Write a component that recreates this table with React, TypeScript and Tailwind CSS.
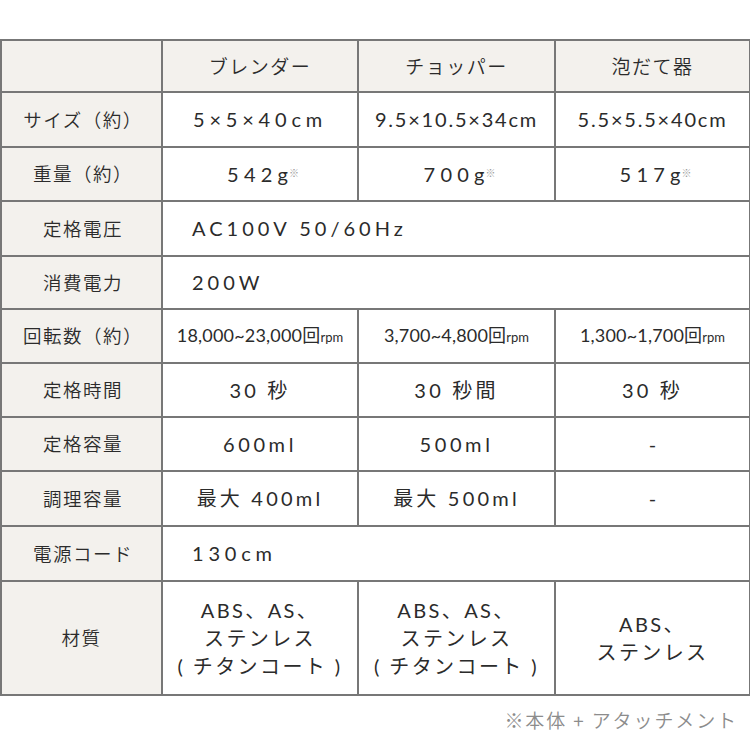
const FONT = { fontFamily: '"Noto Sans CJK JP", "Noto Sans", sans-serif' };
const LATIN = { fontFamily: 'Lato, "Noto Sans CJK JP", sans-serif' };

type Cell = { text: string; cls?: string; mark?: boolean; rpm?: boolean };

interface Row {
  label: string;
  cells: Cell[] | Cell; // single cell = spans the 3 product columns
  h: string;
}

const PRODUCTS = ["ブレンダー", "チョッパー", "泡だて器"];

const ROWS: Row[] = [
  {
    label: "サイズ（約）",
    cells: [
      { text: "5×5×40cm", cls: "tracking-[0.24em]" },
      { text: "9.5×10.5×34cm", cls: "tracking-[0.09em]" },
      { text: "5.5×5.5×40cm", cls: "tracking-[0.09em]" },
    ],
    h: "h-[55px]",
  },
  {
    label: "重量（約）",
    cells: [
      { text: "542g", mark: true, cls: "tracking-[0.26em]" },
      { text: "700g", mark: true, cls: "tracking-[0.26em]" },
      { text: "517g", mark: true, cls: "tracking-[0.26em]" },
    ],
    h: "h-[54px]",
  },
  { label: "定格電圧", cells: { text: "AC100V 50/60Hz", cls: "tracking-[0.2em]" }, h: "h-[55px]" },
  { label: "消費電力", cells: { text: "200W", cls: "tracking-[0.2em]" }, h: "h-[53px]" },
  {
    label: "回転数（約）",
    cells: [
      { text: "18,000~23,000回", rpm: true },
      { text: "3,700~4,800回", rpm: true },
      { text: "1,300~1,700回", rpm: true },
    ],
    h: "h-[54px]",
  },
  {
    label: "定格時間",
    cells: [
      { text: "30 秒", cls: "tracking-[0.16em]" },
      { text: "30 秒間", cls: "tracking-[0.16em]" },
      { text: "30 秒", cls: "tracking-[0.16em]" },
    ],
    h: "h-[54px]",
  },
  {
    label: "定格容量",
    cells: [
      { text: "600ml", cls: "tracking-[0.18em]" },
      { text: "500ml", cls: "tracking-[0.18em]" },
      { text: "-" },
    ],
    h: "h-[54px]",
  },
  {
    label: "調理容量",
    cells: [
      { text: "最大 400ml", cls: "tracking-[0.16em]" },
      { text: "最大 500ml", cls: "tracking-[0.16em]" },
      { text: "-" },
    ],
    h: "h-[55px]",
  },
  { label: "電源コード", cells: { text: "130cm", cls: "tracking-[0.24em]" }, h: "h-[55px]" },
];

const MATERIALS = [
  ["ABS、AS、", "ステンレス", "( チタンコート )"],
  ["ABS、AS、", "ステンレス", "( チタンコート )"],
  ["ABS、", "ステンレス"],
];

function Value({ cell }: { cell: Cell }) {
  if (cell.rpm) {
    return (
      <span className="text-[18px] tracking-[0.01em]">
        {cell.text}
        <span className="text-[13px] tracking-normal">rpm</span>
      </span>
    );
  }
  if (cell.mark) {
    // weight values: the ※ sits tight against the last letter
    return (
      <span className="text-[20px] pl-[6px]">
        <span className={cell.cls}>{cell.text.slice(0, -1)}</span>
        {cell.text.slice(-1)}
        <sup className="ml-[1px] text-[10px] text-[#9a9a9a]">※</sup>
      </span>
    );
  }
  return <span className={`text-[20px] ${cell.cls ?? ""}`}>{cell.text}</span>;
}

export default function App() {
  const line = "border-2 border-[#777777]";
  return (
    <div className="w-[750px] h-[751px] bg-white pt-[39px] text-[#2b2b2b] font-[350]" style={FONT}>
      <table className="w-[749px] border-collapse table-fixed text-[18.5px]">
        <colgroup>
          <col className="w-[161px]" />
          <col className="w-[196px]" />
          <col className="w-[197px]" />
          <col className="w-[195px]" />
        </colgroup>
        <tbody>
          <tr className="h-[52px] bg-[#f3f1ed]">
            <td className={line} />
            {PRODUCTS.map((p) => (
              <td key={p} className={`${line} text-center text-[19px] tracking-[0.08em]`}>
                {p}
              </td>
            ))}
          </tr>
          {ROWS.map((r) => (
            <tr key={r.label} className={r.h}>
              <td className={`${line} bg-[#f3f1ed] text-center tracking-[0.08em] pl-[3px]`}>{r.label}</td>
              {Array.isArray(r.cells) ? (
                r.cells.map((c, i) => (
                  <td key={i} className={`${line} text-center font-normal`} style={LATIN}>
                    <Value cell={c} />
                  </td>
                ))
              ) : (
                <td colSpan={3} className={`${line} pl-[29px] font-normal`} style={LATIN}>
                  <Value cell={r.cells} />
                </td>
              )}
            </tr>
          ))}
          <tr className="h-[114px]">
            <td className={`${line} bg-[#f3f1ed] text-center tracking-[0.08em]`}>材質</td>
            {MATERIALS.map((m, i) => (
              <td
                key={i}
                className={`${line} text-center leading-[28px] tracking-[0.12em] text-[20px] font-normal`}
                style={LATIN}
              >
                {m.map((t, j) => (
                  <div key={j} className="whitespace-pre">
                    {t}
                  </div>
                ))}
              </td>
            ))}
          </tr>
        </tbody>
      </table>
      <div className="flex justify-end pr-[12px] mt-[10px] text-[19px] text-[#8c8c8c] tracking-[0.1em]">
        ※本体 + アタッチメント
      </div>
    </div>
  );
}
